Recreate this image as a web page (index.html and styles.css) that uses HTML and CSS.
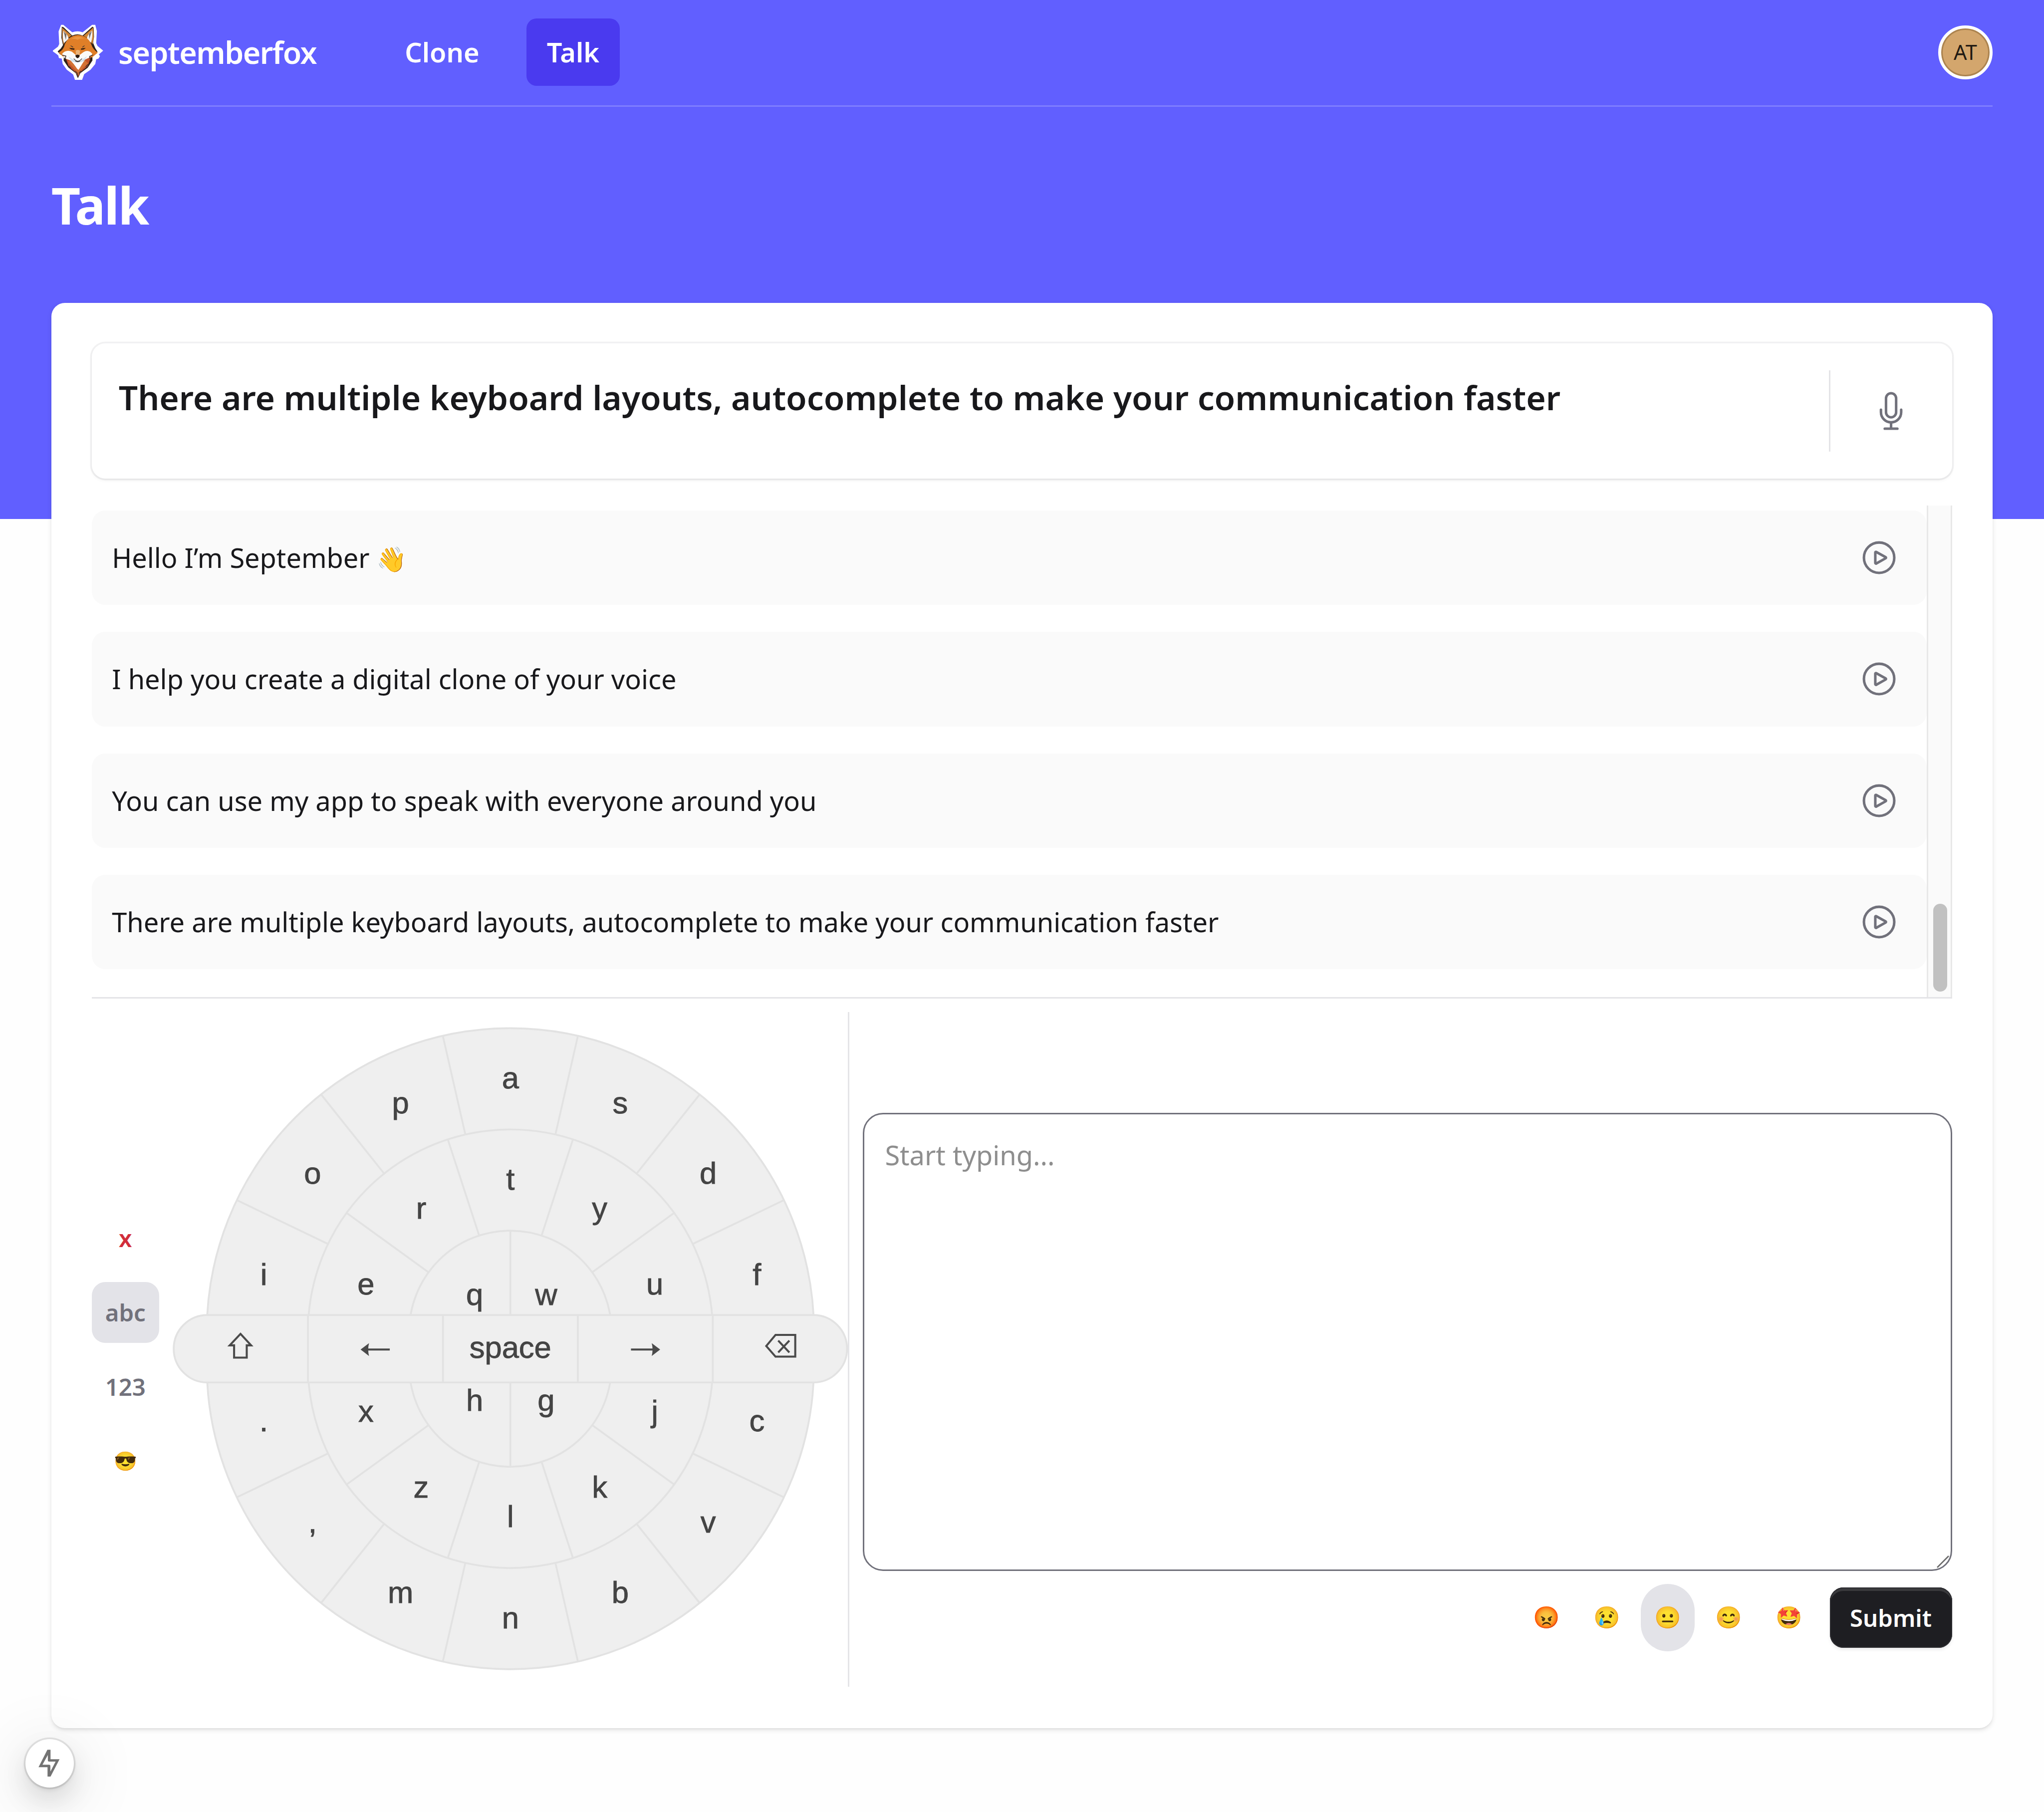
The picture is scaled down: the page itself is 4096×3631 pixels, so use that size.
FILE: index.html
```html
<!DOCTYPE html>
<html lang="en">
<head>
<meta charset="utf-8">
<title>Talk - septemberfox</title>
<link rel="stylesheet" href="styles.css">
</head>
<body>
<div class="page">
  <header class="hero">
    <nav class="nav">
      <a class="brand">
        <svg class="brand-logo" viewBox="64 66 320 348">
          <path fill="#fff" d="M116 68h14l56 48q34-14 66 0l60-48h20l10 40-4 76 8 18 36 30-28 24 8 10-10 16-14 4-6 30-30 36-40 28-16 44h-40l-14-42-40-30-26-36-6-34-18-4-4-16-12-10-26-18 36-28 8-16-4-80z"/>
          <path fill="#2c2018" d="M120 80l12 4 54 52q34-16 66 0l62-56 8 6 2 60-6 36 14 34 14 22-16 16-16 14 0 26-30 46-46 34-16 32-14-32-46-36-30-44 2-26-26-14-14-18 20-18 14-22-10-46z"/>
          <path fill="#cf8434" d="M122 86l60 50-34 24-16 34-8-30zM320 84l-62 54 36 20 20 34 8-40z"/>
          <path fill="#f4f3f1" d="M130 106q26 20 34 50l-30 28q-12-36-4-78zM312 104q-26 20-34 52l26 26q14-38 8-78z"/>
          <path fill="#2c2018" d="M132 110l14 54 4-36zM310 108l-16 50-2-32z" opacity=".65"/>
          <path fill="#c3542a" d="M142 268l22 64 40 34 20 28 16-28 44-36 20-56 2-20z"/>
          <path fill="#e08a3c" d="M158 300l50 56 16 30 20-34 42-40-20-20-92 0z" opacity=".55"/>
          <path fill="#e07f28" d="M140 190q22-52 82-58 60 2 84 58 12 36 42 54l-36 30H134l-34-30q32-16 40-54z"/>
          <path fill="#f0a04c" d="M178 160q40-34 86-2-20-8-44 4-22-10-42-2z" opacity=".7"/>
          <path fill="#fbfaf8" d="M122 252q26-30 62-14l26 22h22l26-20q34-18 56 14l-20 22-34 16-16 22-24 36-24-34-20-22-38-14z"/>
          <path fill="#c9dde9" d="M162 268l36 22q24 16 48 0l34-24-20 36-38 16-38-16z" opacity=".8"/>
          <path fill="#fff" d="M184 300q38 14 76-2l-34 56z"/>
          <path fill="#e9b277" d="M208 232q14-10 28 0l-4 28h-22z"/>
          <path fill="#29190f" d="M167 214l34 4-2 8-20-2zM242 218l30-4-12 10-18 2zM206 262q14-10 28 0-2 14-14 18-12-4-14-18z"/>
          <path fill="none" stroke="#3a3330" stroke-width="4" d="M196 282q24 32 52 0M206 298q16 8 30 0M176 200l16 10M264 200l-14 10"/>
          <path fill="none" stroke="#44332a" stroke-width="5" d="M124 260l22 6-4 18M318 258l-22 10 2 16M164 328l14 14M286 318l-14 16M206 362l12 12 2 22M240 360l-12 16"/>
        </svg>
        <span class="brand-name">septemberfox</span>
      </a>
      <div class="nav-links">
        <a class="nav-link">Clone</a>
        <a class="nav-link nav-link-active">Talk</a>
      </div>
      <span class="avatar">AT</span>
    </nav>
    <h1 class="title">Talk</h1>
  </header>

  <main class="card">
    <section class="message">
      <p class="message-text">There are multiple keyboard layouts, autocomplete to make your communication faster</p>
      <div class="message-mic">
        <svg class="icon" viewBox="0 0 24 24"><path d="M12 18.75a6 6 0 0 0 6-6v-1.5m-6 7.5a6 6 0 0 1-6-6v-1.5m6 7.5v3.75m-3.75 0h7.5M12 15.75a3 3 0 0 1-3-3V4.5a3 3 0 1 1 6 0v8.25a3 3 0 0 1-3 3Z"/></svg>
      </div>
    </section>

    <section class="history">
      <ul class="history-list">
        <li class="history-row"><span>Hello I’m September <span class="wave">👋</span></span><svg class="icon" viewBox="0 0 24 24"><path d="M21 12a9 9 0 1 1-18 0 9 9 0 0 1 18 0Z"/><path d="M15.91 11.672a.375.375 0 0 1 0 .656l-5.603 3.113a.375.375 0 0 1-.557-.328V8.887c0-.286.307-.466.557-.327l5.603 3.112Z"/></svg></li>
        <li class="history-row"><span>I help you create a digital clone of your voice</span><svg class="icon" viewBox="0 0 24 24"><path d="M21 12a9 9 0 1 1-18 0 9 9 0 0 1 18 0Z"/><path d="M15.91 11.672a.375.375 0 0 1 0 .656l-5.603 3.113a.375.375 0 0 1-.557-.328V8.887c0-.286.307-.466.557-.327l5.603 3.112Z"/></svg></li>
        <li class="history-row"><span>You can use my app to speak with everyone around you</span><svg class="icon" viewBox="0 0 24 24"><path d="M21 12a9 9 0 1 1-18 0 9 9 0 0 1 18 0Z"/><path d="M15.91 11.672a.375.375 0 0 1 0 .656l-5.603 3.113a.375.375 0 0 1-.557-.328V8.887c0-.286.307-.466.557-.327l5.603 3.112Z"/></svg></li>
        <li class="history-row"><span>There are multiple keyboard layouts, autocomplete to make your communication faster</span><svg class="icon" viewBox="0 0 24 24"><path d="M21 12a9 9 0 1 1-18 0 9 9 0 0 1 18 0Z"/><path d="M15.91 11.672a.375.375 0 0 1 0 .656l-5.603 3.113a.375.375 0 0 1-.557-.328V8.887c0-.286.307-.466.557-.327l5.603 3.112Z"/></svg></li>
      </ul>
      <div class="scrollbar"><div class="scrollbar-thumb"></div></div>
    </section>

    <section class="composer">
      <div class="tabs">
        <button class="tab tab-close">x</button>
        <button class="tab tab-active">abc</button>
        <button class="tab">123</button>
        <button class="tab tab-emoji">😎</button>
      </div>

      <svg class="wheel" viewBox="-200 -199.6 400 400">
        <g class="wheel-shape">
          <path d="M-180-10a180 180 0 0 1 360 0zM-180 10a180 180 0 0 0 360 0z"/>
          <path d="M-120-10a120 120 0 0 1 240 0M-120 10a120 120 0 0 0 240 0M-60-10a60 60 0 0 1 120 0M-60 10a60 60 0 0 0 120 0"/>
          <g id="upper">
            <path d="M0-10V-70M-18.5-67.1L-37.1-124.1M18.5-67.1L37.1-124.1M-48.5-45.3L-97.1-80.5M48.5-45.3L97.1-80.5"/>
            <path d="M-26.7-127L-40.05-185.5M26.7-127L40.05-185.5M-74.8-103.8L-112.2-150.7M74.8-103.8L112.2-150.7M-108.1-62.1L-162.2-88.1M108.1-62.1L162.2-88.1"/>
          </g>
          <use href="#upper" transform="scale(1 -1)"/>
          <rect x="-199.6" y="-20" width="399.2" height="40" rx="20"/>
          <path d="M-120-20V20M-40-20V20M40-20V20M120-20V20"/>
        </g>
        <g class="wheel-keys">
          <text x="0" y="-154.4">a</text><text x="65.1" y="-139.5">s</text><text x="117.3" y="-97.9">d</text><text x="146.2" y="-37.8">f</text>
          <text x="-65.1" y="-139.5">p</text><text x="-117.3" y="-97.9">o</text><text x="-146.2" y="-37.8">i</text>
          <text x="0" y="-94.4">t</text><text x="52.9" y="-77.2">y</text><text x="85.6" y="-32.2">u</text><text x="-52.9" y="-77.2">r</text><text x="-85.6" y="-32.2">e</text>
          <text x="-21.2" y="-25.9">q</text><text x="21.2" y="-25.9">w</text>
          <text x="-21.2" y="36.9">h</text><text x="21.2" y="36.9">g</text>
          <text x="85.6" y="43.4">j</text><text x="52.9" y="88.4">k</text><text x="0" y="105.6">l</text><text x="-52.9" y="88.4">z</text><text x="-85.6" y="43.4">x</text>
          <text x="146.2" y="49">c</text><text x="117.3" y="109.1">v</text><text x="65.1" y="150.7">b</text><text x="0" y="165.8">n</text>
          <text x="-65.1" y="150.7">m</text><text x="-117.3" y="109.1">,</text><text x="-146.2" y="49">.</text>
          <text x="0" y="5.4">space</text>
        </g>
        <g class="wheel-icons">
          <path d="M-160-8.8l6.3 6.8h-2.6V5.3h-7.5V-2h-2.6z"/>
          <path d="M-71.5 .5h-16.5M71.5 .5h16.5"/>
          <path class="arrow-head" d="M-88.8 .5l5-3.8q-1 3.8 0 7.6zM88.8 .5l-5-3.8q1 3.8 0 7.6z"/>
          <path d="M151.7-1.6l5.5-6.6h11.7v12.9h-11.7zM158.8-4.8l6.6 7M165.4-4.8l-6.6 7"/>
        </g>
      </svg>

      <div class="entry">
        <div class="textarea">Start typing...
          <svg class="grip" viewBox="0 0 24 24"><path d="M1 23L23 1"/></svg>
        </div>
        <div class="actions">
          <button class="mood">😡</button>
          <button class="mood">😢</button>
          <button class="mood mood-active">😐</button>
          <button class="mood">😊</button>
          <button class="mood">🤩</button>
          <button class="submit">Submit</button>
        </div>
      </div>
    </section>
  </main>
  <button class="dev-badge">
    <svg viewBox="240 380 150 185"><path fill-rule="evenodd" d="M303 387h20v60h57L323 557h-19v-59h-57zM306 420l-34 62h42q8 0 8 8v35l33-63h-40q-9 0-9-8z"/></svg>
  </button>
</div>
</body>
</html>
```
FILE: styles.css
```css
* { box-sizing: border-box; }

body {
  margin: 0;
  font-family: "Noto Sans", "Noto Color Emoji", sans-serif;
  font-size: 54.1px;
  line-height: 81.1px;
  color: #18181b;
  background: #fff;
}

button {
  border: 0;
  padding: 0;
  background: none;
  font: inherit;
  color: inherit;
}

.page {
  position: relative;
  width: 4096px;
  height: 3631px;
  overflow: hidden;
  background: #fefefe;
}

/* Header */
.hero {
  height: 1040px;
  padding: 0 103.5px 0 102.7px;
  background: #615fff;
  color: #fff;
}

.nav {
  display: flex;
  align-items: center;
  height: 214.2px;
  padding-bottom: 2px;
  border-bottom: 3.4px solid #7f7eff;
}

.brand {
  display: flex;
  align-items: center;
  gap: 30px;
  width: 668px;
  padding-left: 3px;
}

.brand-logo { width: 101.4px; height: 110.3px; }

.brand-name {
  font-size: 60.8px;
  font-weight: 600;
  letter-spacing: -1.52px;
}

.nav-links {
  display: flex;
  gap: 54px;
  flex: 1;
}

.nav-link {
  padding: 27px 40.6px;
  border-radius: 20.3px;
  font-weight: 600;
}

.nav-link-active { background: #4a3aef; }

.avatar {
  display: grid;
  place-items: center;
  width: 108.2px;
  height: 108.2px;
  border: 6.8px solid #fff;
  border-radius: 50%;
  background: #d3a66d;
  box-shadow: inset 0 0 0 3px rgba(80, 50, 10, .3);
  font-size: 41.5px;
  color: #211a12;
}

.title {
  margin: 137px 0 0;
  font-size: 101.4px;
  line-height: 121.7px;
  font-weight: 700;
  letter-spacing: -2.5px;
}

/* Card */
.card {
  height: 2856px;
  margin: -433px 103.5px 0 102.7px;
  padding: 81px 81px 80px;
  border-radius: 27px;
  background: #fff;
  box-shadow: 0 3.4px 10px rgba(0, 0, 0, .1), 0 3.4px 6.8px -3.4px rgba(0, 0, 0, .1);
  position: relative;
}

.message {
  display: flex;
  height: 271px;
  padding: 54px 0;
  border-radius: 27px;
  background: #fff;
  box-shadow: 0 0 0 3.4px rgba(9, 9, 11, .05), 0 3.4px 6.8px rgba(0, 0, 0, .05);
}

.message-text {
  flex: 1;
  margin: 0;
  padding: 7px 0 0 54px;
  font-size: 67.6px;
  line-height: 94.6px;
  font-weight: 600;
}

.message-mic {
  display: grid;
  place-items: center;
  width: 247px;
  border-left: 3.4px solid #e4e4e7;
}

.icon {
  width: 81.1px;
  height: 81.1px;
  fill: none;
  stroke: #71717b;
  stroke-width: 1.5;
  stroke-linecap: round;
  stroke-linejoin: round;
}

.history {
  display: flex;
  height: 988px;
  margin-top: 54px;
  border-bottom: 3.4px solid #e4e4e7;
}

.history-list {
  display: flex;
  flex: 1;
  flex-direction: column;
  gap: 54.1px;
  margin: 0;
  padding: 10px 0 0;
  list-style: none;
}

.history-row {
  display: flex;
  align-items: center;
  justify-content: space-between;
  height: 189.3px;
  padding: 0 54px 0 40.6px;
  border-radius: 27px;
  background: #fafafa;
}

.wave { font-size: 49px; line-height: 1; }

.scrollbar {
  width: 51px;
  padding: 798px 7px 0 10px;
  border: solid #e8e8e8;
  border-width: 0 3.4px;
  background: #fafafa;
}

.scrollbar-thumb {
  height: 176px;
  border-radius: 14px;
  background: #c1c1c1;
}

/* Composer */
.composer {
  display: flex;
  height: 1352px;
  margin-top: 27px;
}

.tabs {
  display: flex;
  flex-direction: column;
  justify-content: center;
  gap: 27px;
  width: 135.2px;
  margin-right: 27px;
}

.tab {
  height: 121.7px;
  border-radius: 27px;
  font-size: 47.3px;
  font-weight: 600;
  color: #71717b;
}

.tab-close { color: #d12d3a; }
.tab-active { background: #e3e3e8; }
.tab-emoji { font-size: 37.5px; }

.wheel {
  width: 1353.5px;
  height: 1352px;
}

.wheel-shape { fill: #efefef; stroke: #e2e2e2; stroke-width: 1.1; }
.wheel-keys {
  font-family: "Liberation Sans", Arial, sans-serif;
  font-size: 18.2px;
  text-anchor: middle;
  fill: #444;
  stroke: #444;
  stroke-width: .25;
}
.wheel-icons { fill: none; stroke: #4a4a4a; stroke-width: 1.2; }
.arrow-head { fill: #4a4a4a; stroke: none; }

.entry {
  flex: 1;
  padding: 202px 0 0 27px;
  border-left: 3.4px solid #e4e4e7;
}

.textarea {
  position: relative;
  height: 918px;
  padding: 41px;
  border: 3.4px solid #71717b;
  border-radius: 40.6px;
  color: #8e8e8e;
}

.grip {
  position: absolute;
  right: 3px;
  bottom: 3px;
  width: 25px;
  height: 25px;
  fill: none;
  stroke: #6b6b6b;
  stroke-width: 2.6;
}

.actions {
  display: flex;
  align-items: center;
  justify-content: flex-end;
  gap: 13.5px;
  margin-top: 26px;
}

.mood {
  width: 108.2px;
  height: 135.2px;
  padding-bottom: 4px;
  border-radius: 54px;
  font-size: 43px;
}

.mood-active { background: #e3e3e8; }

.submit {
  width: 245px;
  height: 121.7px;
  margin-left: 13.5px;
  border-radius: 27px;
  background: #1e1e22;
  box-shadow: inset 0 0 0 2px #2c2c30, inset 0 7px 0 #3a3a3d, 0 3.4px 6.8px rgba(0, 0, 0, .08);
  font-size: 47.3px;
  font-weight: 600;
  color: #fff;
}

/* Floating badge over the page corner */
.dev-badge {
  position: absolute;
  left: 50.5px;
  top: 3485px;
  display: grid;
  place-items: center;
  width: 97px;
  height: 97px;
  border-radius: 50%;
  background: #fff;
  box-shadow: 0 0 0 3.4px rgba(0, 0, 0, .09), 0 4px 10px rgba(0, 0, 0, .08), 0 27px 54px rgba(0, 0, 0, .12), 0 20px 120px 40px rgba(0, 0, 0, .05);
}

.dev-badge svg {
  width: 47.5px;
  height: 58.6px;
  fill: #737373;
}
```
